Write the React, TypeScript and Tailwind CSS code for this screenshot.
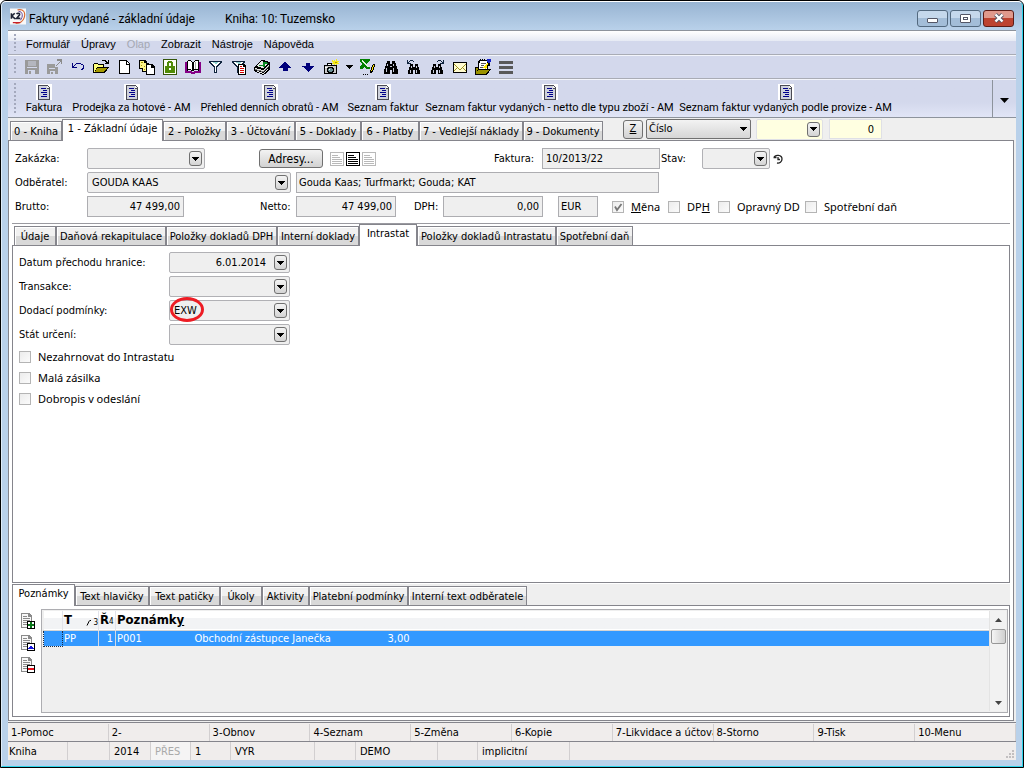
import type { ReactNode } from "react";

/* ---------- icon helpers ---------- */

function Glyph({ children, size = 16 }: { children: ReactNode; size?: number }) {
  return (
    <svg width={size} height={size} viewBox={`0 0 ${size} ${size}`} shapeRendering="crispEdges" aria-hidden="true" className="shrink-0">
      {children}
    </svg>
  );
}

const K = "#000";

const IconSave = () => (
  <Glyph>
    <path d="M1 1h13l1 1v13H1z" fill="#9a9a9a" />
    <path d="M4 2h8v5H4z" fill="#b4b6be" />
    <path d="M3 8h10v1H3zM4 11h7v4H4z" fill="#d3d8ec" />
    <path d="M5 12h2v3H5z" fill="#9a9a9a" />
  </Glyph>
);
const IconSaveAs = () => (
  <Glyph>
    <path d="M0 5h8v3h3v7H0z" fill="#9a9a9a" />
    <path d="M2 9h6v1H2zM3 12h5v3H3z" fill="#d3d8ec" />
    <path d="M4 13h2v2H4z" fill="#9a9a9a" />
    <path d="M10 0h5v5h-1V3h-1v1h-1v1h-1v1h-1v1H9V6h1V5h1V4h1V3h1V2h-3z" fill="#8c8c8c" />
  </Glyph>
);
const IconUndo = () => (
  <Glyph>
    <path d="M2 4h1v3h1V6h1V5h1V4h5v1h2v1h1v4h-1v1h-2v-1h1V9h1V6h-2V5H6v1H5v1H4v1h3v1H2z" fill="#00007b" />
  </Glyph>
);
const IconOpen = () => (
  <Glyph>
    <path d="M0 14V5h1V4h4v1h6v3h5L12 14z" fill={K} />
    <path d="M1 5h4v1h5v2H4v1H3v2H2v2H1z" fill="#ffff7b" />
    <path d="M4 9h10l-3 4H2z" fill="#a59a00" />
    <path d="M9 1h4v1h1v1h1V1h1v4h-4V4h1V3h-1V2H9z" fill={K} />
  </Glyph>
);
const IconNew = () => (
  <Glyph>
    <path d="M3 1h8v1h1v1h1v1h1v11H3z" fill={K} />
    <path d="M4 2h6v4h3v8H4z" fill="#fff" />
    <path d="M11 3h1v1h1v1h-2z" fill="#fff" />
  </Glyph>
);
const IconCopy = () => (
  <Glyph>
    <path d="M0 1h6l2 2v7H0zM3 4h6l2 2v7H3zM7 5h6l3 3v8H7z" fill={K} />
    <path d="M1 2h4v2h2v1H4v4H1zM4 5h3v7H4z" fill="#fff58a" />
    <path d="M2 3h2v1H2zM2 6h1v1H2zM5 7h1v1H5zM5 10h1v1H5z" fill="#a59a00" />
    <path d="M8 6h4v3h3v6H8z" fill="#fff" />
  </Glyph>
);
const IconLock = () => (
  <Glyph>
    <path d="M1 0h14v16H1z" fill="#34560a" />
    <path d="M2 1h12v14H2z" fill="#fdfff4" />
    <path d="M5 3h1V2h4v1h1v4h2v7H3V7h2zM7 4v3h2V4z" fill="#4f8b06" fillRule="evenodd" />
    <path d="M7 9h2v2H7z" fill="#fff" />
  </Glyph>
);
const IconBook = () => (
  <Glyph>
    <path d="M0 3h2v9h5v1h2v-1h5V3h2v11h-6v1H6v-1H0z" fill="#850087" />
    <path d="M2 2h1V1h3v1h1v1h1v9H6v-1H3v1H2zM8 3h1V2h1V1h4v11h-1v-1H9v1H8z" fill={K} />
    <path d="M3 2h3v1h1v8H6v-1H3zM9 3h1V2h3v8H9z" fill="#fff" />
    <path d="M10 3h1v7h-1z" fill="#aaa" />
  </Glyph>
);
const Funnel = () => (
  <>
    <path d="M1 2h13v2h-1v1h-1v1h-1v1h-1v1H9v6H6V8H5V7H4V6H3V5H2V4H1z" fill="#10243e" />
    <path d="M3 3h9v1h-1v1h-1v1H9v1H8v6H7V7H6V6H5V5H4V4H3z" fill="#fff" />
    <path d="M5 3h5v1H9v1H7V4H5z" fill="#8fd0ce" />
  </>
);
const IconFilter = () => (
  <Glyph>
    <Funnel />
  </Glyph>
);
const IconFilterList = () => (
  <Glyph>
    <Funnel />
    <path d="M7 5h6l2 2v9H7z" fill={K} />
    <path d="M8 6h4v2h2v7H8z" fill="#fff" />
    <path d="M9 7h2v1H9zM9 9h4v1H9zM9 11h4v1H9zM9 13h4v1H9z" fill="#d40000" />
  </Glyph>
);
const IconBooks = () => (
  <Glyph>
    <path d="M0 8h1V7h1V6h1V5h1V4h1V3h1V2h1V1h4v1h3v1h2v8h-1v1h-1v1h-1v1h-1v1h-2v1H8v-1H6v-1H3v-1H1v-1H0z" fill={K} />
    <path d="M2 7l5-5 7 2-5 5zM1 9l8 2 6-6v2l-6 6-8-2zM1 11l8 3 5-5v2l-5 4-7-3z" fill="#e6e6e6" />
    <path d="M1 10l8 2 6-6v1l-6 6-8-2z" fill="#777" />
    <path d="M5 6h4V3h4v1h1v1h-3v3H9V7H5z" fill="#0b8a24" />
  </Glyph>
);
const IconUp = () => (
  <Glyph>
    <path d="M8 3h1v1h1v1h1v1h1v1h1v1h1v1h-3v3H6V9H2V8h1V7h1V6h1V5h1V4h1V3z" fill="#00007b" />
  </Glyph>
);
const IconDown = () => (
  <Glyph>
    <path d="M6 4h4v3h4v1h-1v1h-1v1h-1v1h-1v1H9v1H8v-1H7v-1H6v-1H5V9H4V8H2V7h4z" fill="#00007b" />
  </Glyph>
);
const IconCamera = () => (
  <Glyph>
    <path d="M1 6h3V4h5v2h5v9H1z" fill={K} />
    <path d="M2 7h11v7H2z" fill="#c9c9c9" />
    <path d="M2 8h2v1H2zM5 5h3v1H5z" fill="#fff" />
    <path d="M5 8h5v1h1v4h-1v1H5v-1H4V9h1z" fill={K} />
    <path d="M6 9h3v1h1v2H9v1H6v-1H5v-2h1z" fill="#6b8f95" />
    <path d="M6 10h1v1H6z" fill="#fff" />
    <path d="M9 1h1v1h1V1h1v1h1V0h1v2h2v1h-1v1h1v1h-2v1h-1V5h-1v1h-1V5H9V4h1V3H9z" fill="#f6ec15" />
    <path d="M12 3h2v1h-2z" fill="#b09800" />
  </Glyph>
);
const IconExcel = () => (
  <Glyph>
    <path d="M0 0h10v2H9v1H8v1H7v2h1v1h1v1h1v2H6V9H5V8H4v1H3v1H0V7h1V6h1V4H1V3H0z" fill="#008000" />
    <path d="M2 1h1v1h1v1h1v1h1v1h1v1h1v1h1v1H8V8H7V7H6V6H5V5H4V4H3V3H2z" fill="#dff3df" />
    <path d="M13 5h2v3h-1v3h-1v2h-1v1h-2v-3h1V8h1V6h1z" fill={K} />
    <path d="M13 6h1v2h-1v3h-1v1h-1v-1h1V8h1z" fill="#ffe600" />
    <path d="M3 15h1v1H3zM5 15h1v1H5zM7 15h1v1H7z" fill={K} />
  </Glyph>
);
const IconBinoculars = () => (
  <Glyph>
    <path d="M4 2h3v3h2V2h3v2h1v3h1v3h1v5H9v-4H7v4H1v-5h1V7h1V4h1z" fill={K} />
    <path d="M4 5h1v2H4zM3 9h1v4H3zM10 5h1v2h-1zM10 9h1v4h-1zM7 7h2v1H7z" fill="#c8cbd8" />
  </Glyph>
);
const SmallBinoculars = () => (
  <>
    <path d="M4 5h3v3h2V5h3v3h1v3h1v4H9v-4H7v4H2v-4h1V8h1z" fill={K} />
    <path d="M5 7h1v2H5zM4 11h1v3H4zM10 7h1v2h-1zM10 11h1v3h-1z" fill="#c8cbd8" />
  </>
);
const IconFindPrev = () => (
  <Glyph>
    <SmallBinoculars />
    <path d="M1 1h1v2h1V2h1V1h3v1h1v1H7V2H4v1H3v1h2v1H1z" fill="#10243e" />
  </Glyph>
);
const IconFindNext = () => (
  <Glyph>
    <SmallBinoculars />
    <path d="M15 1h-1v2h-1V2h-1V1H9v1H8v1h1V2h3v1h1v1h-2v1h4z" fill="#10243e" />
  </Glyph>
);
const IconMail = () => (
  <Glyph>
    <path d="M1 3h14v11H1z" fill={K} />
    <path d="M2 4h12v9H2z" fill="#fffbd0" />
    <path d="M2 5h1v1h1v1h1v1h1v1h1v1h2V9h1V8h1V7h1V6h1V5h1v1h-1v1h-1v1h-1v1h1v1h1v1h1v1h-1v-1h-1v-1h-1V9h-1v1H9v1H7v-1H6V9H5v1H4v1H3v1H2v-1h1v-1h1V9h1V8H4V7H3V6H2z" fill="#9c9120" />
  </Glyph>
);
const IconNotes = () => (
  <Glyph>
    <path d="M4 1h10v3h1v3h-2v3h3l-4 6H0V8h3V2h1z" fill={K} />
    <path d="M5 2h7v8H4V4h1z" fill="#fff" />
    <path d="M6 4h5v1H6zM6 6h3v1H6zM5 8h3v1H5z" fill="#555" />
    <path d="M8 9l4-5 1 1-2 5z" fill="#ffe600" />
    <path d="M12 0h4v3h-1v1h-2V3h-1z" fill="#1725c9" />
    <path d="M1 9h2v2H2v3H1zM3 11h11l-3 4H1z" fill="#9a9200" />
    <path d="M5 0h1v1H5zM7 0h1v1H7zM9 0h1v1H9z" fill={K} />
  </Glyph>
);
const IconLines = () => (
  <Glyph>
    <path d="M1 2h14v3H1zM1 7h14v3H1zM1 12h14v3H1z" fill="#595959" />
  </Glyph>
);

const IconReport = () => (
  <Glyph>
    <path d="M0 0h16v16H0z" fill="#fff" />
    <path d="M2 1h9l3 3v12H2z" fill="#4b4b55" />
    <path d="M3 2h8v3h2v10H3z" fill="#cfd2dc" />
    <path d="M11 2h1v1h1v1h-2z" fill="#f4f4f4" />
    <path d="M5 4h5v1H5zM7 6h4v1H7zM5 8h6v1H5zM7 10h4v1H7zM5 12h6v1H5z" fill="#00008b" />
  </Glyph>
);

const Caret = () => (
  <svg width="7" height="4" viewBox="0 0 7 4" shapeRendering="crispEdges" aria-hidden="true">
    <path d="M0 0h7v1H6v1H5v1H4v1H3V3H2V2H1V1H0z" fill={K} />
  </svg>
);

const AppLogo = () => (
  <svg width="16" height="17" viewBox="0 0 17 17" aria-hidden="true">
    <rect width="17" height="17" fill="#f8f8f8" />
    <path d="M8 1.500C14 0 17 4 15 10c-1 3-4 5.500-9 6" fill="none" stroke="#d8672f" strokeWidth="1.200" />
    <path d="M9 3c5 0 5 6 2 9.500" fill="none" stroke="#5b3b8f" strokeWidth="1" />
    <path d="M3 15h8" stroke="#c51d2b" strokeWidth="1.200" />
    <path d="M1.500 5v6M5 5L2 8l3.500 3M7 6c1-1.500 4-1 3 1L7 10.500h4" fill="none" stroke="#1e2335" strokeWidth="1.700" />
  </svg>
);

function RowIcon({ kind }: { kind: "add" | "edit" | "remove" }) {
  return (
    <svg width="15" height="16" viewBox="0 0 15 16" shapeRendering="crispEdges" aria-hidden="true">
      <path d="M1 0h8l3 3v12H1z" fill="#8a8a8a" />
      <path d="M2 1h6v3h3v10H2z" fill="#f8f8f8" />
      <path d="M3 3h4v1H3zM3 5h7v1H3zM3 7h7v1H3zM3 9h4v1H3zM3 11h4v1H3z" fill="#8a8a8a" />
      <path d="M7 8h8v8H7z" fill={K} />
      <path d="M8 9h6v6H8z" fill="#fff" />
      {kind === "add" && <path d="M10 9h2v2h2v2h-2v2h-2v-2H8v-2h2z" fill="#0b7a1c" />}
      {kind === "edit" && <path d="M10 11h2v1h1v1h1v1H8v-1h1v-1h1z" fill="#1414e0" />}
      {kind === "remove" && <path d="M8 11h6v2H8z" fill="#e8111c" />}
    </svg>
  );
}

function AlignIcon({ active }: { active?: boolean }) {
  const c = active ? "#000" : "#b9b9b9";
  return (
    <svg width="14" height="14" viewBox="0 0 14 14" shapeRendering="crispEdges" aria-hidden="true">
      <path d="M0 0h14v14H0z" fill={c} />
      <path d="M1 1h12v12H1z" fill="#fff" />
      <path d="M2 3h6v1H2zM2 5h8v1H2zM2 7h10v1H2zM2 9h10v1H2zM2 11h10v1H2z" fill={c} />
    </svg>
  );
}

/* ---------- form controls ---------- */

function Lookup({ id, label, value = "", className, inputClass = "", yellow }: { id: string; label: string; value?: string; className: string; inputClass?: string; yellow?: boolean }) {
  return (
    <div className={`flex h-[21px] shrink-0 items-center rounded-[2px] border pr-[2px] ${yellow ? "border-[#dfe0e6] bg-[#ffffe1]" : "border-[#b1b1b5] bg-[#efefef]"} ${className}`}>
      <input id={id} aria-label={label} defaultValue={value} className={`h-full w-0 min-w-0 flex-1 bg-transparent outline-none ${inputClass}`} />
      <button type="button" aria-label={`${label} – výběr`} className="flex h-[15px] w-[13px] items-center justify-center rounded-[3px] border border-[#707070] bg-linear-to-b from-[#f4f4f4] to-[#d4d4d4]">
        <Caret />
      </button>
    </div>
  );
}

function Field({ id, label, value, className }: { id: string; label: string; value: string; className: string }) {
  return <input id={id} aria-label={label} defaultValue={value} className={`h-[21px] shrink-0 border border-[#adadb1] bg-[#efefef] px-[3px] outline-none ${className}`} />;
}

function Check({ children, checked, className = "" }: { children: ReactNode; checked?: boolean; className?: string }) {
  return (
    <label className={`flex shrink-0 items-center whitespace-nowrap font-['Noto_Sans',sans-serif] ${className}`}>
      <span className="relative flex h-3 w-3">
        <input type="checkbox" defaultChecked={checked} className="peer h-3 w-3 appearance-none border border-[#b4b4b4] bg-linear-to-br from-[#ececec] to-[#fbfbfb]" />
        <svg viewBox="0 0 12 12" className="pointer-events-none absolute inset-0 hidden peer-checked:block" aria-hidden="true">
          <path d="M3 5.500l2 3.500 4.500-6" fill="none" stroke="#777" strokeWidth="1.800" />
        </svg>
      </span>
      {children}
    </label>
  );
}

type TabSpec = { label: string; w: string; active?: boolean };

function Tabs({ items, children }: { items: TabSpec[]; children?: ReactNode }) {
  return (
    <div className="flex h-[21px] shrink-0 items-end">
      <div role="tablist" className="flex h-full items-end">
        {items.map((t) => (
          <button
            key={t.label}
            type="button"
            role="tab"
            aria-selected={!!t.active}
            className={`shrink-0 whitespace-nowrap border-x border-t border-[#85858c] text-center ${t.w} ${
              t.active
                ? "z-10 -mb-px h-[22px] bg-white pb-[3px]"
                : "h-[19px] bg-linear-to-b from-[#f1f1f1] from-50% to-[#d9d9d9] to-50% pt-[2px] shadow-[inset_1px_1px_0_#ffffff]"
            }`}
          >
            {t.label}
          </button>
        ))}
      </div>
      {children}
    </div>
  );
}

function Grip() {
  return <div className="my-[3px] w-[2px] shrink-0 self-stretch bg-[repeating-linear-gradient(to_bottom,#a4a9bd_0px,#a4a9bd_2px,transparent_2px,transparent_4px)]" />;
}

/* ---------- data ---------- */

const mainTabs: TabSpec[] = [
  { label: "0 - Kniha", w: "w-[52px]" },
  { label: "1 - Základní údaje", w: "w-[101px]", active: true },
  { label: "2 - Položky", w: "w-[63px]" },
  { label: "3 - Účtování", w: "w-[69px]" },
  { label: "5 - Doklady", w: "w-[66px]" },
  { label: "6 - Platby", w: "w-[58px]" },
  { label: "7 - Vedlejší náklady", w: "w-[104px]" },
  { label: "9 - Dokumenty", w: "w-[80px]" },
];
const detailTabs: TabSpec[] = [
  { label: "Údaje", w: "w-[42px]" },
  { label: "Daňová rekapitulace", w: "w-[110px]" },
  { label: "Položky dokladů DPH", w: "w-[111px]" },
  { label: "Interní doklady", w: "w-[82px]" },
  { label: "Intrastat", w: "w-[58px]", active: true },
  { label: "Položky dokladů Intrastatu", w: "w-[139px]" },
  { label: "Spotřební daň", w: "w-[77px]" },
];
const noteTabs: TabSpec[] = [
  { label: "Poznámky", w: "w-[63px]", active: true },
  { label: "Text hlavičky", w: "w-[74px]" },
  { label: "Text patičky", w: "w-[71px]" },
  { label: "Úkoly", w: "w-[42px]" },
  { label: "Aktivity", w: "w-[47px]" },
  { label: "Platební podmínky", w: "w-[99px]" },
  { label: "Interní text odběratele", w: "w-[119px]" },
];
const reports = [
  { label: "Faktura", w: "w-[36px]" },
  { label: "Prodejka za hotové - AM", w: "w-[117px]" },
  { label: "Přehled denních obratů - AM", w: "w-[137px]" },
  { label: "Seznam faktur", w: "w-[68px]" },
  { label: "Seznam faktur vydaných - netto dle typu zboží - AM", w: "w-[243px]" },
  { label: "Seznam faktur vydaných podle provize - AM", w: "w-[207px]" },
];
const tools: [string, () => ReactNode][] = [
  ["Uložit", IconSave],
  ["Uložit jako", IconSaveAs],
  ["Zpět", IconUndo],
  ["Otevřít", IconOpen],
  ["Nový", IconNew],
  ["Kopie", IconCopy],
  ["Zámek", IconLock],
  ["Kniha", IconBook],
  ["Filtr", IconFilter],
  ["Seznam filtrů", IconFilterList],
  ["Knihy", IconBooks],
  ["Předchozí", IconUp],
  ["Další", IconDown],
  ["Snímek", IconCamera],
];
const moreTools: [string, () => ReactNode][] = [
  ["Excel", IconExcel],
  ["Hledat", IconBinoculars],
  ["Hledat předchozí", IconFindPrev],
  ["Hledat další", IconFindNext],
  ["Pošta", IconMail],
  ["Poznámky", IconNotes],
  ["Řádky", IconLines],
];
const fnKeys = ["1-Pomoc", "2-", "3-Obnov", "4-Seznam", "5-Změna", "6-Kopie", "7-Likvidace a účtová", "8-Storno", "9-Tisk", "10-Menu"];
const status: [string, string][] = [
  ["Kniha", "w-[60px] pl-px"],
  ["", "w-[42px]"],
  ["2014", "w-[41px] pl-1"],
  ["PŘES", "w-[40px] pl-1 text-[#a9a9a9] bg-[#f5f4f4]"],
  ["1", "w-[40px] pl-1"],
  ["VYR", "w-[84px] pl-1"],
  ["", "w-[41px]"],
  ["DEMO", "w-[82px] pl-1"],
  ["", "w-[40px]"],
  ["implicitní", "w-[92px] pl-1"],
];

/* ---------- screen ---------- */

export default function App() {
  return (
    <div className="flex h-screen flex-col overflow-hidden rounded-t-[6px] border border-black bg-[#b9d1ea] font-['DejaVu_Sans_Condensed','Noto_Sans',sans-serif] text-[11px] leading-[14px] text-black">
      <div className="flex min-h-0 flex-1 flex-col rounded-t-[5px] border border-t-white border-r-[#2bd3ea] border-b-[#2bd3ea] border-l-[#dfecf8] bg-linear-to-b from-[#98b4d2] to-[#b9d1ea] to-[28px] px-[6px] pb-[6px]">
        {/* title bar */}
        <header className="flex h-[28px] shrink-0 items-center pl-[2px] font-['Roboto','Noto_Sans',sans-serif] text-[12px]">
          <AppLogo />
          <h1 className="ml-[3px] mt-[5px] w-[196px] whitespace-nowrap">Faktury vydané - základní údaje</h1>
          <span className="mt-[5px] flex-1 whitespace-nowrap">Kniha: 10: Tuzemsko</span>
          <div className="mt-[4px] mr-[2px] flex gap-[2px]">
            <button type="button" aria-label="Minimalizovat" className="flex h-[17px] w-[31px] items-center justify-center rounded-[3px] border border-[#53697f] bg-linear-to-b from-[#c5d8ec] from-50% to-[#a3bdd8] to-50%">
              <span className="mt-1 h-[5px] w-[11px] rounded-[1px] border border-[#535666] bg-white" />
            </button>
            <button type="button" aria-label="Maximalizovat" className="flex h-[17px] w-[31px] items-center justify-center rounded-[3px] border border-[#53697f] bg-linear-to-b from-[#c5d8ec] from-50% to-[#a3bdd8] to-50%">
              <span className="flex h-[9px] w-[11px] items-center justify-center rounded-[1px] border border-[#535666] bg-white">
                <span className="h-[3px] w-[5px] border border-[#535666]" />
              </span>
            </button>
            <button type="button" aria-label="Zavřít" className="flex h-[17px] w-[31px] items-center justify-center rounded-[3px] border border-[#5c1c16] bg-linear-to-b from-[#e0998c] from-50% to-[#bd4330] to-50%">
              <svg width="12" height="10" viewBox="0 0 12 10" aria-hidden="true">
                <path d="M2.500 1.500l7 7M9.500 1.500l-7 7" stroke="#535666" strokeWidth="4" />
                <path d="M2.500 1.500l7 7M9.500 1.500l-7 7" stroke="#fff" strokeWidth="2.400" />
              </svg>
            </button>
          </div>
        </header>

        <div className="flex min-h-0 flex-1 flex-col border-t border-[#8d939c] bg-[#efefef]">
          {/* menu */}
          <nav className="flex h-[24px] shrink-0 items-center border-b border-[#a9acb5] bg-linear-to-b from-white to-[#e9ecf5] to-[10px] bg-[#d3d8ec] pl-[6px] font-['Liberation_Sans',Arial,sans-serif] [background-image:linear-gradient(to_bottom,#ffffff_0px,#e6eaf4_10px,#d3d8ec_10px)]">
            <Grip />
            <div className="flex items-center gap-[11px] pl-[10px] pt-[2px]">
              {["Formulář", "Úpravy", "Olap", "Zobrazit", "Nástroje", "Nápověda"].map((m) => (
                <button key={m} type="button" disabled={m === "Olap"} className="disabled:text-[#a5a8b3]">
                  {m}
                </button>
              ))}
            </div>
          </nav>

          {/* icon toolbar */}
          <div className="flex h-[24px] shrink-0 items-center border-t border-b border-t-[#f3f5fb] border-b-[#a9acb5] bg-[#d3d8ec] pl-[6px]">
            <Grip />
            <div className="flex items-center gap-[7px] pl-[8px]">
              {tools.map(([n, I]) => (
                <button key={n} type="button" aria-label={n}>
                  <I />
                </button>
              ))}
              <button type="button" aria-label="Další možnosti">
                <Caret />
              </button>
              {moreTools.map(([n, I]) => (
                <button key={n} type="button" aria-label={n}>
                  <I />
                </button>
              ))}
            </div>
          </div>

          {/* report toolbar */}
          <div className="flex h-[39px] shrink-0 border-t border-b border-t-[#f3f5fb] border-b-[#8d939c] bg-linear-to-b from-[#d3d8ec] from-60% to-[#e1e5f6] pl-[6px]">
            <Grip />
            <div className="flex flex-1 gap-[11px] pl-[10px] pt-[4px] font-['Roboto',Arial,sans-serif]">
              {reports.map((r) => (
                <button key={r.label} type="button" className={`flex shrink-0 flex-col items-center whitespace-nowrap ${r.w}`}>
                  <IconReport />
                  <span className="leading-[15px]">{r.label}</span>
                </button>
              ))}
            </div>
            <button type="button" aria-label="Další sestavy" className="flex w-[24px] items-center justify-center border-l border-[#8d939c] pt-[3px]">
              <svg width="9" height="5" viewBox="0 0 9 5" aria-hidden="true">
                <path d="M0 0h9L4.500 5z" fill="#000" />
              </svg>
            </button>
          </div>

          {/* main tabs */}
          <div className="flex shrink-0 pt-px pl-[2px]">
            <Tabs items={mainTabs}>
              <div className="flex h-full items-center pb-px pl-[20px]">
                <button type="button" className="h-[19px] w-[20px] rounded-[3px] border border-[#707070] bg-linear-to-b from-[#f3f3f3] to-[#d2d2d2] underline">Z</button>
                <div className="relative ml-[3px] flex items-center">
                  <select aria-label="Řadit podle" className="h-[20px] w-[105px] appearance-none rounded-[2px] border border-[#707070] bg-linear-to-b from-[#f3f3f3] to-[#d6d6d6] pl-[2px]">
                    <option>Číslo</option>
                  </select>
                  <span className="pointer-events-none absolute right-1">
                    <Caret />
                  </span>
                </div>
                <Lookup id="range" label="Filtr" yellow className="ml-[5px] w-[67px]" />
                <input aria-label="Hodnota" defaultValue="0" className="ml-[6px] h-[20px] w-[53px] border border-[#dfe0e6] bg-[#ffffe1] pr-[7px] text-right outline-none" />
              </div>
            </Tabs>
          </div>

          <main className="mr-[2px] flex min-h-0 flex-1 flex-col border border-[#85858c] bg-white">
            {/* invoice header */}
            <section className="mx-[3px] flex shrink-0 flex-col gap-[3px] border-b border-[#9a9aa0] pt-[7px] pb-[6px] pl-[3px]">
              <div className="flex h-[21px] items-center">
                <label htmlFor="zakazka" className="w-[72px]">Zakázka:</label>
                <Lookup id="zakazka" label="Zakázka" className="w-[118px]" />
                <button type="button" className="ml-[54px] h-[19px] w-[64px] rounded-[3px] border border-[#707070] bg-linear-to-b from-[#f3f3f3] to-[#d2d2d2] text-[12px]">Adresy...</button>
                <div className="ml-[7px] flex gap-[2px]">
                  <AlignIcon />
                  <AlignIcon active />
                  <AlignIcon />
                </div>
                <label htmlFor="faktura" className="ml-[118px] w-[48px]">Faktura:</label>
                <Field id="faktura" label="Faktura" value="10/2013/22" className="w-[118px]" />
                <label htmlFor="stav" className="ml-px w-[41px]">Stav:</label>
                <Lookup id="stav" label="Stav" className="w-[68px]" />
                <svg width="10" height="10" viewBox="0 0 10 10" className="ml-[3px]" aria-hidden="true">
                  <path d="M1 3.500C2 .500 9 .500 9 5c0 3-2.500 4.500-5 4M5 3v2.500h2M.500 3.500h3" fill="none" stroke="#222" strokeWidth="1.300" />
                </svg>
              </div>
              <div className="flex h-[21px] items-center">
                <label htmlFor="odberatel" className="w-[72px]">Odběratel:</label>
                <Lookup id="odberatel" label="Odběratel" value="GOUDA KAAS" className="w-[204px]" inputClass="pl-[4px]" />
                <Field id="adresa" label="Adresa odběratele" value="Gouda Kaas; Turfmarkt; Gouda; KAT" className="ml-[5px] w-[363px] pl-[2px]" />
              </div>
              <div className="flex h-[21px] items-center">
                <label htmlFor="brutto" className="w-[72px]">Brutto:</label>
                <Field id="brutto" label="Brutto" value="47 499,00" className="w-[97px] text-right" />
                <label htmlFor="netto" className="ml-[76px] w-[36px]">Netto:</label>
                <Field id="netto" label="Netto" value="47 499,00" className="w-[100px] text-right" />
                <label htmlFor="dph" className="ml-[18px] w-[29px]">DPH:</label>
                <Field id="dph" label="DPH" value="0,00" className="w-[100px] text-right" />
                <Field id="mena" label="Kód měny" value="EUR" className="ml-[15px] w-[40px] pl-[2px]" />
                <Check checked className="ml-[14px] w-[56px] gap-[7px]"><span><u>M</u>ěna</span></Check>
                <Check className="w-[50px] gap-[7px]"><span>DP<u>H</u></span></Check>
                <Check className="w-[87px] gap-[7px]">Opravný DD</Check>
                <Check className="gap-[7px]">Spotřební daň</Check>
              </div>
            </section>

            {/* detail */}
            <div className="shrink-0 pl-[5px]">
              <Tabs items={detailTabs} />
            </div>
            <section className="mx-[3px] flex min-h-0 flex-1 flex-col border border-[#85858c] bg-white pt-[6px] pl-[6px]">
              <div className="flex flex-col gap-[3px]">
                <div className="flex h-[21px] items-center">
                  <label htmlFor="datum" className="w-[150px]">Datum přechodu hranice:</label>
                  <Lookup id="datum" label="Datum přechodu hranice" value="6.01.2014" className="w-[121px]" inputClass="pr-[8px] text-right" />
                </div>
                <div className="flex h-[21px] items-center">
                  <label htmlFor="transakce" className="w-[150px]">Transakce:</label>
                  <Lookup id="transakce" label="Transakce" className="w-[121px]" />
                </div>
                <div className="relative flex h-[21px] items-center">
                  <label htmlFor="dodaci" className="w-[150px]">Dodací podmínky:</label>
                  <Lookup id="dodaci" label="Dodací podmínky" value="EXW" className="w-[121px]" inputClass="pl-[4px]" />
                  <span className="pointer-events-none absolute -top-[3px] left-[151px] h-[25px] w-[34px] rounded-[50%] border-[3px] border-[#ed1c24]" />
                </div>
                <div className="flex h-[21px] items-center">
                  <label htmlFor="stat" className="w-[150px]">Stát určení:</label>
                  <Lookup id="stat" label="Stát určení" className="w-[121px]" />
                </div>
              </div>
              <div className="mt-[5px] flex flex-col gap-[7px]">
                <Check className="gap-[7px]">Nezahrnovat do Intrastatu</Check>
                <Check className="gap-[7px]">Malá zásilka</Check>
                <Check className="gap-[7px]">Dobropis v odeslání</Check>
              </div>
            </section>

            {/* notes */}
            <div className="mx-[3px] mt-px shrink-0 bg-[#efefef]">
              <Tabs items={noteTabs} />
            </div>
            <section className="mx-[3px] mb-[3px] flex h-[112px] shrink-0 border border-[#85858c] bg-white py-[3px] pr-px pl-[7px]">
              <div className="flex w-[21px] flex-col gap-[6px] pt-[4px]">
                <button type="button" aria-label="Přidat poznámku"><RowIcon kind="add" /></button>
                <button type="button" aria-label="Upravit poznámku"><RowIcon kind="edit" /></button>
                <button type="button" aria-label="Smazat poznámku"><RowIcon kind="remove" /></button>
              </div>
              <div className="flex flex-1 border border-[#adadb1] bg-[#efefef] p-px">
                <div className="min-w-0 flex-1">
                  <table className="w-full table-fixed border-collapse text-left">
                    <thead>
                      <tr className="h-[19px] border-b border-[#d5d5d5] bg-linear-to-b from-white from-40% to-[#f2f3f5] to-40% text-[13px] font-bold">
                        <th className="w-[19px] border-r border-[#e2e3ea]" />
                        <th className="w-[36px] border-r border-[#e2e3ea] p-0 pl-px">
                          <span className="flex items-center justify-between">
                            T
                            <span className="flex items-end text-[8px] font-normal leading-[8px]">
                              <svg width="7" height="8" viewBox="0 0 7 8" aria-hidden="true"><path d="M1 6.500l2.500-5M4 1.500h1" stroke="#000" fill="none" /></svg>
                              <span className="pt-[5px]">3</span>
                            </span>
                          </span>
                        </th>
                        <th className="w-[17px] border-r border-[#e2e3ea] p-0 pl-px whitespace-nowrap"><span className="flex items-end">Ř<span className="text-[8px] font-normal leading-[10px]">4</span></span></th>
                        <th className="w-[78px] p-0 pl-px"><span className="whitespace-nowrap">Poznámk<u>y</u></span></th>
                        <th className="w-[193px]" />
                        <th />
                      </tr>
                    </thead>
                    <tbody>
                      <tr className="h-[16px] bg-[#3399ff] leading-[15px] text-white">
                        <td className="border border-dotted border-[#1a2d48]" />
                        <td className="border-r border-[#d5d9e4] p-0 pl-px">PP</td>
                        <td className="border-r border-[#d5d9e4] p-0 pr-[2px] text-right">1</td>
                        <td className="p-0 pl-px">P001</td>
                        <td className="p-0 pl-px">Obchodní zástupce Janečka</td>
                        <td className="p-0 pl-px">3,00</td>
                      </tr>
                    </tbody>
                  </table>
                </div>
                <div className="flex w-[17px] flex-col items-center border-l border-[#e4e4e4] bg-[#f2f2f2]">
                  <button type="button" aria-label="Nahoru" className="flex h-[18px] items-center">
                    <svg width="7" height="4" viewBox="0 0 7 4" aria-hidden="true"><path d="M0 4h7L3.500 0z" fill="#444" /></svg>
                  </button>
                  <div className="h-[15px] w-[15px] rounded-[2px] border border-[#979797] bg-linear-to-r from-[#f5f5f5] to-[#cfcfcf]" />
                  <div className="flex-1" />
                  <button type="button" aria-label="Dolů" className="flex h-[16px] items-center">
                    <svg width="7" height="4" viewBox="0 0 7 4" aria-hidden="true"><path d="M0 0h7L3.500 4z" fill="#444" /></svg>
                  </button>
                </div>
              </div>
            </section>
          </main>

          {/* function keys */}
          <div className="mt-px flex h-[19px] shrink-0 border-t border-[#85858c] bg-[#f0edec]">
            {fnKeys.map((k) => (
              <button key={k} type="button" className="mt-px min-w-0 flex-1 basis-0 overflow-hidden whitespace-nowrap border-r border-[#d2cfd0] pt-px pl-[3px] text-left">
                {k}
              </button>
            ))}
          </div>
          {/* status bar */}
          <footer className="flex h-[19px] shrink-0 items-stretch border-t border-[#85858c] bg-[#f0edec] leading-[20px]">
            {status.map(([t, w], i) => (
              <span key={i} className={`shrink-0 border-r border-[#d2cfd0] ${w}`}>{t}</span>
            ))}
            <span className="flex flex-1 items-end justify-end p-px">
              <svg width="9" height="9" viewBox="0 0 9 9" shapeRendering="crispEdges" aria-hidden="true">
                <path d="M6 0h2v2H6zM3 3h2v2H3zM6 3h2v2H6zM0 6h2v2H0zM3 6h2v2H3zM6 6h2v2H6z" fill="#c2bfc0" />
              </svg>
            </span>
          </footer>
        </div>
      </div>
    </div>
  );
}
